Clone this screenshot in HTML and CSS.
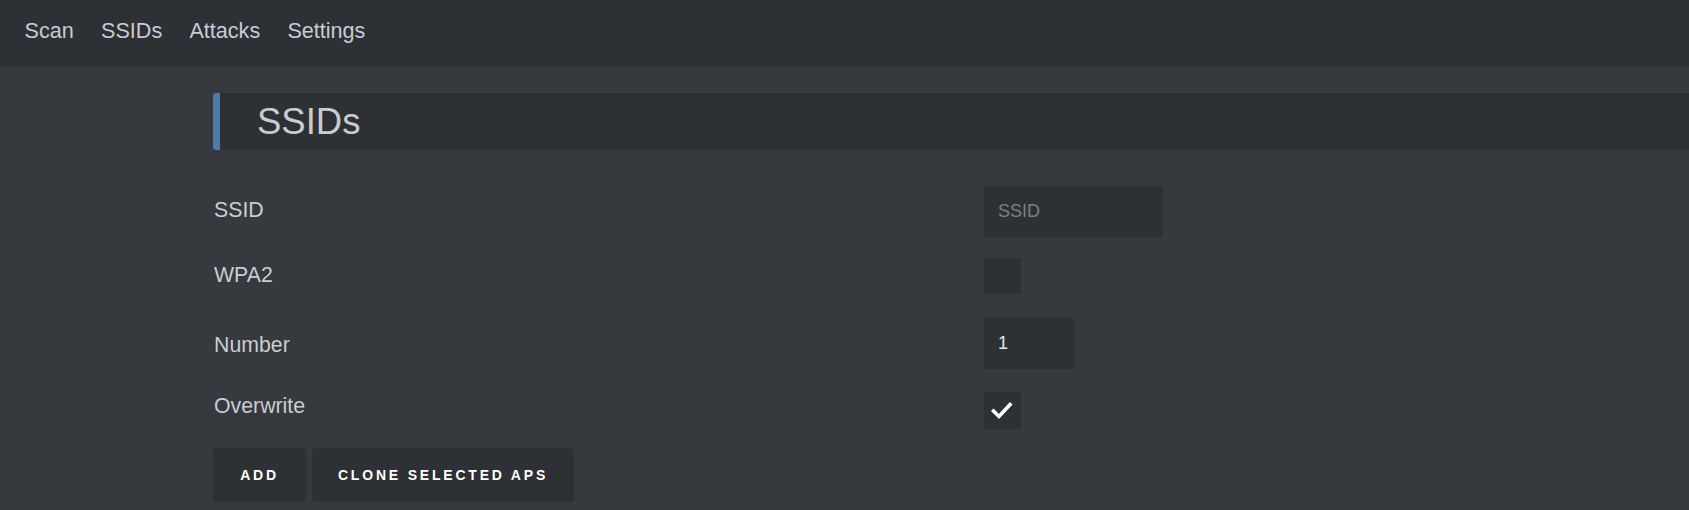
FILE: index.html
```html
<!DOCTYPE html>
<html>
<head>
<meta charset="utf-8">
<link rel="stylesheet" href="styles.css">
</head>
<body>
<nav class="nav">
  <a class="nav-link">Scan</a>
  <a class="nav-link">SSIDs</a>
  <a class="nav-link">Attacks</a>
  <a class="nav-link">Settings</a>
</nav>
<main class="container">
  <h1 class="header">SSIDs</h1>
  <div class="row row-ssid">
    <label class="label">SSID</label>
    <div class="input input-ssid placeholder">SSID</div>
  </div>
  <div class="row row-wpa">
    <label class="label">WPA2</label>
    <div class="checkbox"></div>
  </div>
  <div class="row row-num">
    <label class="label">Number</label>
    <div class="input input-num">1</div>
  </div>
  <div class="row row-over">
    <label class="label">Overwrite</label>
    <div class="checkbox">
      <svg class="check" width="37" height="37" viewBox="0 0 37 37"><polyline points="9.5,19 15,24.5 26,12.5" fill="none" stroke="#ffffff" stroke-width="3.6" stroke-linecap="square" stroke-linejoin="miter"/></svg>
    </div>
  </div>
  <div class="buttons">
    <button class="btn btn-add">ADD</button>
    <button class="btn btn-clone">CLONE SELECTED APS</button>
  </div>
</main>
</body>
</html>
```

FILE: styles.css
```css
html, body {
  margin: 0;
  padding: 0;
}
body {
  background: #363a3e;
  font-family: "Liberation Sans", Arial, sans-serif;
  color: #c9ccd0;
  height: 510px;
  overflow: hidden;
}
.nav {
  display: flex;
  height: 66px;
  background: #2d3034;
  padding-left: 11px;
}
.nav-link {
  font-size: 21.6px;
  line-height: 62px;
  padding: 0 13.6px;
  color: #c9ccd0;
}
.container {
  padding-left: 213px;
}
.header {
  margin: 27px 0 0 0;
  height: 57px;
  line-height: 57px;
  font-size: 36.5px;
  font-weight: normal;
  background: #2e3134;
  border-left: 7px solid #4c7ab3;
  border-radius: 3px 0 0 3px;
  padding-left: 37px;
  color: #c9ccd0;
}
.row {
  display: flex;
  align-items: center;
}
.label {
  width: 770px;
  font-size: 21.3px;
  line-height: 24px;
  padding-left: 1px;
  color: #c9ccd0;
}
.row-ssid { margin-top: 36px; height: 51px; }
.row-wpa { margin-top: 21px; height: 36px; }
.row-num { margin-top: 24px; height: 51px; }
.row-over { margin-top: 23px; height: 37px; }
.row-ssid .label { margin-top: -4px; }
.row-wpa .label { margin-top: -3px; }
.row-num .label { margin-top: 2px; }
.row-over .label { margin-top: -10px; }
.input {
  box-sizing: border-box;
  height: 51px;
  line-height: 51px;
  background: #2e3134;
  border-radius: 2px;
  padding-left: 14px;
  font-size: 18px;
}
.input-ssid { width: 179px; }
.input-num { width: 90px; color: #e2e4e6; }
.placeholder { color: #7b7e82; }
.checkbox {
  width: 37px;
  height: 100%;
  background: #2e3134;
  border-radius: 2px;
}
.check { display: block; }
.buttons {
  display: flex;
  gap: 6px;
  margin-top: 19px;
}
.btn {
  height: 54px;
  border: none;
  border-radius: 4px;
  background: #2d3034;
  color: #ffffff;
  font-family: "Liberation Sans", Arial, sans-serif;
  font-weight: bold;
  font-size: 14px;
  letter-spacing: 2.8px;
  padding: 0;
}
.btn-add { width: 93px; }
.btn-clone { width: 262px; }
```
